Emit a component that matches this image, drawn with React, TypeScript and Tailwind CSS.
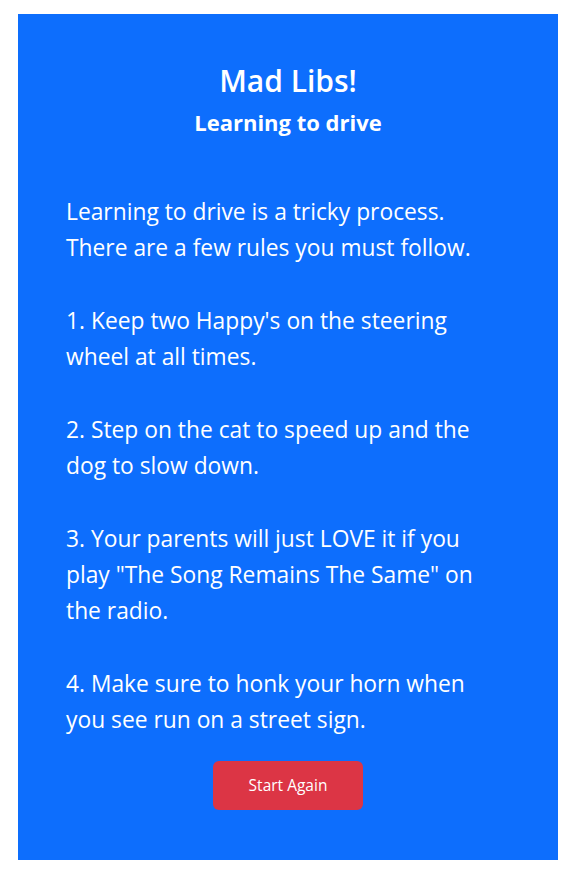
import React from "react";

const paragraphs: string[][] = [
  ["Learning to drive is a tricky process.", "There are a few rules you must follow."],
  ["1. Keep two Happy's on the steering", "wheel at all times."],
  ["2. Step on the cat to speed up and the", "dog to slow down."],
  [
    "3. Your parents will just LOVE it if you",
    'play "The Song Remains The Same" on',
    "the radio.",
  ],
  ["4. Make sure to honk your horn when", "you see run on a street sign."],
];

const App = () => {
  return (
    <div className="min-h-[873px] bg-white pt-[14px] pl-[18px] pr-[12px] font-['Open_Sans',sans-serif]">
      <div className="flex h-[846px] flex-col bg-[#0d6efd] px-12 pt-[48px] text-white">
        <h1 className="text-center text-[30px] font-semibold leading-[38px]">Mad Libs!</h1>
        <h2 className="mt-[8px] text-center text-[22px] font-bold leading-[28px]">Learning to drive</h2>

        <div className="mt-[58px] text-[22.8px] leading-[36.3px]">
          {paragraphs.map((lines, i) => (
            <React.Fragment key={i}>
              {i > 0 && <div className="h-[36.3px]" />}
              {lines.map((line) => (
                <div key={line} className="whitespace-nowrap">
                  {line}
                </div>
              ))}
            </React.Fragment>
          ))}
        </div>

        <button className="mx-auto mt-[23px] flex h-[49px] w-[150px] items-center justify-center rounded-md bg-[#dc3545] text-[15.5px] text-white">
          Start Again
        </button>
      </div>
    </div>
  );
};

export default App;
